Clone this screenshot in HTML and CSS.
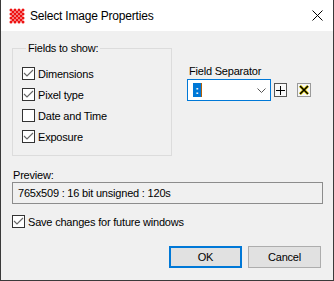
FILE: index.html
```html
<!DOCTYPE html>
<html lang="en">
<head>
  <meta charset="UTF-8">
  <title>Select Image Properties</title>
  <link rel="stylesheet" href="styles.css">
</head>
<body>

  <div class="window">

    <div class="titlebar">
      <svg class="app-icon" width="16" height="16" viewBox="0 0 16 16">
        <g fill="#ee1111">
          <circle cx="2" cy="2" r="1.5"/><circle cx="6" cy="2" r="1.5"/><circle cx="10" cy="2" r="1.5"/><circle cx="14" cy="2" r="1.5"/>
          <circle cx="4" cy="4" r="1.5"/><circle cx="8" cy="4" r="1.5"/><circle cx="12" cy="4" r="1.5"/>
          <circle cx="2" cy="6" r="1.5"/><circle cx="6" cy="6" r="1.5"/><circle cx="10" cy="6" r="1.5"/><circle cx="14" cy="6" r="1.5"/>
          <circle cx="4" cy="8" r="1.5"/><circle cx="8" cy="8" r="1.5"/><circle cx="12" cy="8" r="1.5"/>
          <circle cx="2" cy="10" r="1.5"/><circle cx="6" cy="10" r="1.5"/><circle cx="10" cy="10" r="1.5"/><circle cx="14" cy="10" r="1.5"/>
          <circle cx="4" cy="12" r="1.5"/><circle cx="8" cy="12" r="1.5"/><circle cx="12" cy="12" r="1.5"/>
          <circle cx="2" cy="14" r="1.5"/><circle cx="6" cy="14" r="1.5"/><circle cx="10" cy="14" r="1.5"/><circle cx="14" cy="14" r="1.5"/>
        </g>
      </svg>
      <span class="title">Select Image Properties</span>
      <svg class="close" width="11" height="11" viewBox="0 0 11 11">
        <path d="M0.5 0.5 L10.5 10.5 M10.5 0.5 L0.5 10.5" stroke="#000" stroke-width="1" fill="none"/>
      </svg>
    </div>

    <div class="client">

      <div class="top-row">
        <fieldset class="fields">
          <legend>Fields to show:</legend>
          <div class="check"><span class="box checked"></span>Dimensions</div>
          <div class="check"><span class="box checked"></span>Pixel type</div>
          <div class="check"><span class="box"></span>Date and Time</div>
          <div class="check"><span class="box checked"></span>Exposure</div>
        </fieldset>

        <div class="separator">
          <div class="sep-label">Field Separator</div>
          <div class="sep-row">
            <div class="combo">
              <span class="sel">:</span><span class="caret"></span>
              <svg class="chevron" width="9" height="5" viewBox="0 0 9 5">
                <path d="M0.5 0.5 L4.5 4.5 L8.5 0.5" stroke="#555" stroke-width="1" fill="none"/>
              </svg>
            </div>
            <span class="tool-btn plus">
              <svg width="9" height="9" viewBox="0 0 9 9">
                <path d="M4.5 0 V9 M0 4.5 H9" stroke="#000" stroke-width="1" fill="none"/>
              </svg>
            </span>
            <span class="tool-btn del">
              <svg width="10" height="10" viewBox="0 0 10 10">
                <path d="M1 1 L9 9 M9 1 L1 9" stroke="#e8d400" stroke-width="3" fill="none"/>
                <path d="M1 1 L9 9 M9 1 L1 9" stroke="#000" stroke-width="1.6" fill="none"/>
              </svg>
            </span>
          </div>
        </div>
      </div>

      <div class="preview-label">Preview:</div>
      <div class="preview">765x509 : 16 bit unsigned : 120s</div>

      <div class="check save"><span class="box checked"></span>Save changes for future windows</div>

      <div class="buttons">
        <button class="btn default">OK</button>
        <button class="btn">Cancel</button>
      </div>

    </div>
  </div>

</body>
</html>
```

FILE: styles.css
```css
* { box-sizing: border-box; }
body { margin: 0; font-family: "Liberation Sans", Arial, sans-serif; font-size: 11px; letter-spacing: -0.2px; color: #000; }

.window { width: 334px; height: 281px; background: #f0f0f0; border: 1px solid #3a3a3a; border-top: none; display: flex; flex-direction: column; }

.titlebar { height: 31px; flex: none; background: #fff; display: flex; align-items: center; padding: 0 10px 0 8px; }
.app-icon { flex: none; }
.title { margin-left: 5px; font-size: 12px; letter-spacing: -0.2px; }
.close { margin-left: auto; }

.client { flex: 1; padding: 10px 10px 0 11px; display: flex; flex-direction: column; }

.top-row { display: flex; align-items: flex-start; }
.fields { width: 160px; margin: 0; padding: 12px 8px 12px 9px; border: 1px solid #dcdcdc; }
.fields legend { padding: 0 2px; margin-left: 4px; line-height: 14px; }
.fields .check + .check { margin-top: 8px; }

.check { display: flex; align-items: center; height: 13px; line-height: 14px; }
.box { width: 13px; height: 13px; flex: none; margin-right: 3px; background: #fff; border: 1px solid #333; }
.box.checked { background: #fff url("data:image/svg+xml;utf8,<svg xmlns='http://www.w3.org/2000/svg' width='11' height='11' viewBox='0 0 11 11'><path d='M1 5 L4 8 L10 2' stroke='%23666' stroke-width='1.1' fill='none'/></svg>") no-repeat center; }

.separator { margin: 23px 0 0 15px; }
.sep-label { line-height: 14px; padding-left: 2px; margin-bottom: 1px; }
.sep-row { display: flex; align-items: center; }
.combo { width: 84px; height: 22px; background: #fff; border: 1px solid #0078d7; display: flex; align-items: center; padding: 0 4px 0 5px; }
.sel { width: 8px; height: 14px; background: #0078d7; color: #fff; line-height: 14px; text-align: center; font-weight: bold; }
.caret { width: 1px; height: 14px; background: #b0600a; }
.chevron { margin-left: auto; }

.tool-btn { display: flex; align-items: center; justify-content: center; }
.tool-btn.plus { width: 13px; height: 14px; margin-left: 3px; border: 1px solid #555; background: #f8f8f8; }
.tool-btn.del { width: 14px; height: 14px; margin-left: 10px; border: 1px solid #9a9a9a; background: #f6f6f6; }

.preview-label { margin-top: 12px; line-height: 14px; padding-left: 1px; }
.preview { height: 22px; border: 1px solid #8c8c8c; padding-left: 5px; line-height: 20px; }

.save { margin-top: 11px; }

.buttons { margin-top: 18px; margin-right: 2px; display: flex; justify-content: flex-end; gap: 6px; }
.btn { width: 73px; height: 22px; font: inherit; letter-spacing: inherit; color: #000; background: #e1e1e1; border: 1px solid #adadad; padding: 0; }
.btn.default { border: 2px solid #0078d7; }
```
